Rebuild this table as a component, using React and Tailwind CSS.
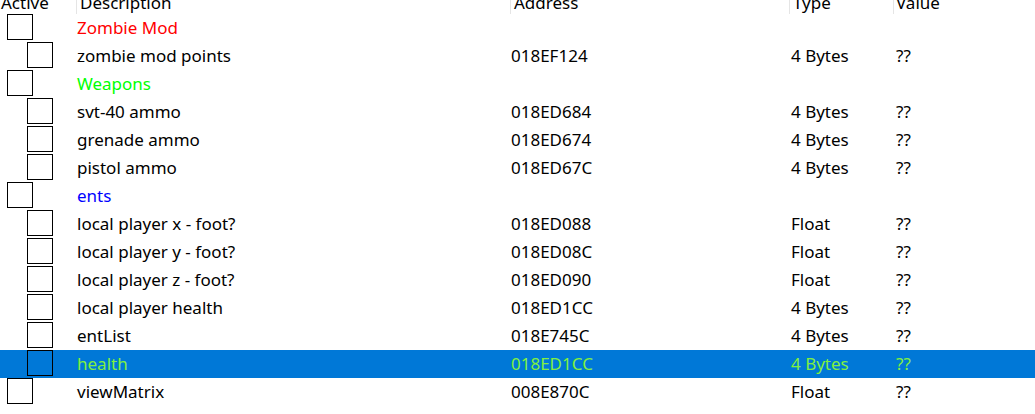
import React from "react";

const rows = [
  { d: "Zombie Mod", c: "text-[#ff0000]", lvl: 0, a: "", t: "", v: "" },
  { d: "zombie mod points", lvl: 1, a: "018EF124", t: "4 Bytes", v: "??" },
  { d: "Weapons", c: "text-[#00ff00]", lvl: 0, a: "", t: "", v: "" },
  { d: "svt-40 ammo", lvl: 1, a: "018ED684", t: "4 Bytes", v: "??" },
  { d: "grenade ammo", lvl: 1, a: "018ED674", t: "4 Bytes", v: "??" },
  { d: "pistol ammo", lvl: 1, a: "018ED67C", t: "4 Bytes", v: "??" },
  { d: "ents", c: "text-[#0000ff]", lvl: 0, a: "", t: "", v: "" },
  { d: "local player x - foot?", lvl: 1, a: "018ED088", t: "Float", v: "??" },
  { d: "local player y - foot?", lvl: 1, a: "018ED08C", t: "Float", v: "??" },
  { d: "local player z - foot?", lvl: 1, a: "018ED090", t: "Float", v: "??" },
  { d: "local player health", lvl: 1, a: "018ED1CC", t: "4 Bytes", v: "??" },
  { d: "entList", lvl: 1, a: "018E745C", t: "4 Bytes", v: "??" },
  { d: "health", lvl: 1, a: "018ED1CC", t: "4 Bytes", v: "??", sel: true },
  { d: "viewMatrix", lvl: 0, a: "008E870C", t: "Float", v: "??" },
];

function Row({ r }) {
  const txt = r.sel ? "text-[#80f040]" : r.c || "text-black";
  const txt2 = r.sel ? "text-[#80f040]" : "text-black";
  return (
    <div className={`flex h-[28px] ${r.sel ? "bg-[#0078d7]" : ""}`}>
      <div className="w-[77px] shrink-0 h-full">
        <div
          className={`w-[26px] h-[26px] border border-black ${
            r.lvl ? "ml-[27px]" : "ml-[7px]"
          }`}
        />
      </div>
      <div className={`w-[434px] shrink-0 flex items-center pb-[2px] ${txt}`}>{r.d}</div>
      <div className={`w-[280px] shrink-0 flex items-center pb-[2px] ${txt2}`}>{r.a}</div>
      <div className={`w-[105px] shrink-0 flex items-center pb-[2px] ${txt2}`}>{r.t}</div>
      <div className={`flex-1 flex items-center pb-[2px] ${txt2}`}>{r.v}</div>
    </div>
  );
}

export default function App() {
  return (
    <div
      className="w-[1035px] h-[414px] bg-white overflow-hidden text-[17px] leading-none"
      style={{ fontFamily: '"Noto Sans", "Open Sans", sans-serif' }}
    >
      <div className="h-[14px] overflow-hidden flex text-black">
        <div className="w-[77px] shrink-0 flex items-end pb-[3px] border-r border-[#e5e5e5] pl-[1px]">Active</div>
        <div className="w-[434px] shrink-0 flex items-end pb-[3px] border-r border-[#e5e5e5] pl-[3px]">Description</div>
        <div className="w-[279px] shrink-0 flex items-end pb-[3px] border-r border-[#e5e5e5] pl-[3px]">Address</div>
        <div className="w-[104px] shrink-0 flex items-end pb-[3px] border-r border-[#e5e5e5] pl-[3px]">Type</div>
        <div className="flex-1 flex items-end pb-[3px] pl-[2px]">Value</div>
      </div>
      {rows.map((r, i) => (
        <Row key={i} r={r} />
      ))}
    </div>
  );
}
